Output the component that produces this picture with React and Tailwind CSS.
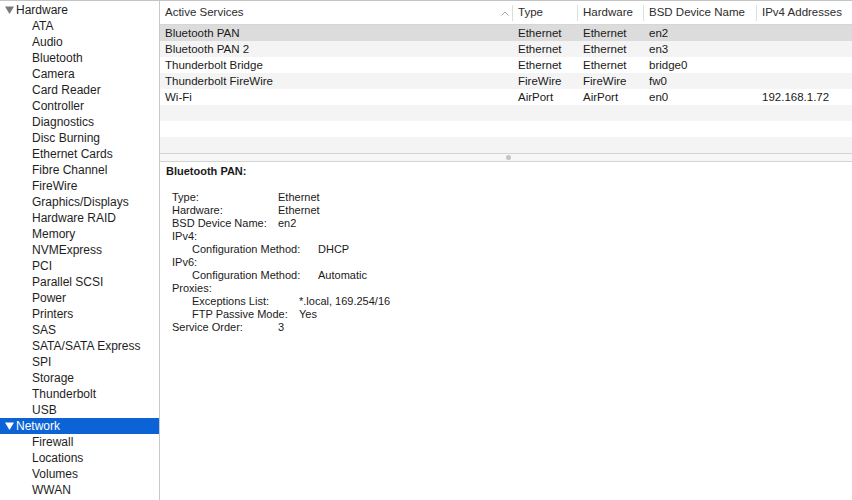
import React from "react";

const hardware = [
  "ATA", "Audio", "Bluetooth", "Camera", "Card Reader", "Controller", "Diagnostics",
  "Disc Burning", "Ethernet Cards", "Fibre Channel", "FireWire", "Graphics/Displays",
  "Hardware RAID", "Memory", "NVMExpress", "PCI", "Parallel SCSI", "Power", "Printers",
  "SAS", "SATA/SATA Express", "SPI", "Storage", "Thunderbolt", "USB",
];
const network = ["Firewall", "Locations", "Volumes", "WWAN"];

const services = [
  ["Bluetooth PAN", "Ethernet", "Ethernet", "en2", ""],
  ["Bluetooth PAN 2", "Ethernet", "Ethernet", "en3", ""],
  ["Thunderbolt Bridge", "Ethernet", "Ethernet", "bridge0", ""],
  ["Thunderbolt FireWire", "FireWire", "FireWire", "fw0", ""],
  ["Wi-Fi", "AirPort", "AirPort", "en0", "192.168.1.72"],
  null, null, null,
];

const cols = "grid grid-cols-[353px_65px_66px_113px_1fr]";

function Triangle({ className }) {
  return (
    <svg width="9" height="8" viewBox="0 0 9 8" className={className}>
      <path d="M0 0.5 L9 0.5 L4.5 8 Z" fill="currentColor" />
    </svg>
  );
}

function Sidebar() {
  return (
    <div className="w-[160px] shrink-0 border-r border-[#c9c9c9] pt-[1px] text-[12px] text-[#1e1e1e]">
      <div className="h-[16px] flex items-center pl-[5px] gap-[2px]">
        <Triangle className="text-[#7a7a7a]" />
        <span>Hardware</span>
      </div>
      {hardware.map((h) => (
        <div key={h} className="h-[16px] flex items-center pl-[32px]">{h}</div>
      ))}
      <div className="h-[16px] flex items-center pl-[5px] gap-[2px] bg-[#0b63d6] text-white">
        <Triangle className="text-white" />
        <span>Network</span>
      </div>
      {network.map((h) => (
        <div key={h} className="h-[16px] flex items-center pl-[32px]">{h}</div>
      ))}
    </div>
  );
}

function HeaderCell({ children, last, arrow }) {
  return (
    <div className="relative flex items-center pl-[5px]">
      <span>{children}</span>
      {arrow && (
        <svg width="8" height="5" viewBox="0 0 8 5" className="absolute right-[4px] top-[10px]">
          <path d="M0.5 4.5 L4 1 L7.5 4.5" stroke="#a8a8a8" strokeWidth="1" fill="none" />
        </svg>
      )}
      {!last && <div className="absolute right-0 top-[4px] h-[16px] w-px bg-[#dedede]" />}
    </div>
  );
}

function Table() {
  return (
    <div className="text-[11.5px] text-[#1a1a1a]">
      <div className={`${cols} h-[24px] border-b border-[#d6d6d6] text-[#2c2c2c]`}>
        <HeaderCell arrow>Active Services</HeaderCell>
        <HeaderCell>Type</HeaderCell>
        <HeaderCell>Hardware</HeaderCell>
        <HeaderCell>BSD Device Name</HeaderCell>
        <HeaderCell last>IPv4 Addresses</HeaderCell>
      </div>
      {services.map((r, i) => (
        <div
          key={i}
          className={`${cols} h-[16px] items-center ${
            i === 0 ? "bg-[#dcdcdc]" : i % 2 === 1 ? "bg-[#f4f4f4]" : "bg-white"
          }`}
        >
          {r && r.map((c, j) => (
            <div key={j} className="pl-[5px] whitespace-nowrap">{c}</div>
          ))}
        </div>
      ))}
    </div>
  );
}

function Detail() {
  const L = "h-[13px] flex items-center whitespace-nowrap";
  return (
    <div className="pl-[6px] pt-[2px] text-[11px] text-[#1a1a1a]">
      <div className="h-[14px] flex items-center font-bold">Bluetooth PAN:</div>
      <div className="pl-[6px] pt-[13px]">
        <div className={L}><span className="w-[106px]">Type:</span>Ethernet</div>
        <div className={L}><span className="w-[106px]">Hardware:</span>Ethernet</div>
        <div className={L}><span className="w-[106px]">BSD Device Name:</span>en2</div>
        <div className={L}>IPv4:</div>
        <div className={`${L} pl-[20px]`}><span className="w-[126px]">Configuration Method:</span>DHCP</div>
        <div className={L}>IPv6:</div>
        <div className={`${L} pl-[20px]`}><span className="w-[126px]">Configuration Method:</span>Automatic</div>
        <div className={L}>Proxies:</div>
        <div className={`${L} pl-[20px]`}><span className="w-[107px]">Exceptions List:</span>*.local, 169.254/16</div>
        <div className={`${L} pl-[20px]`}><span className="w-[107px]">FTP Passive Mode:</span>Yes</div>
        <div className={L}><span className="w-[106px]">Service Order:</span>3</div>
      </div>
    </div>
  );
}

export default function App() {
  return (
    <div
      className="w-[852px] h-[500px] bg-white border-t border-[#c4c4c4] flex overflow-hidden"
      style={{ fontFamily: '"Liberation Sans", Arial, sans-serif' }}
    >
      <Sidebar />
      <div className="flex-1 flex flex-col">
        <Table />
        <div className="h-[9px] border-t border-b border-[#d4d4d4] bg-[#f6f6f6] flex items-center justify-center">
          <div className="w-[5px] h-[5px] rounded-full bg-[#c4c4c4] ml-[4px]" />
        </div>
        <Detail />
      </div>
    </div>
  );
}
